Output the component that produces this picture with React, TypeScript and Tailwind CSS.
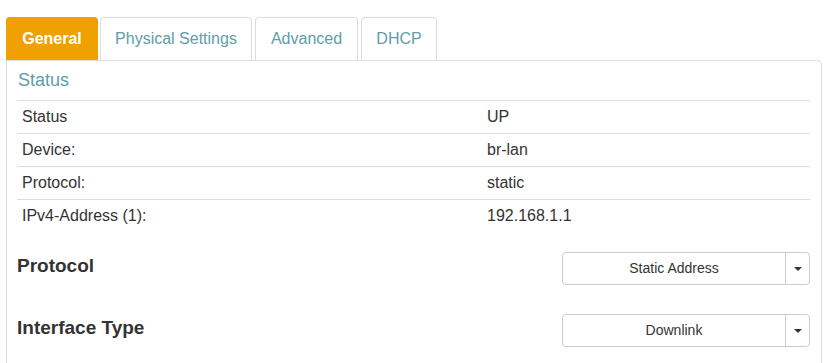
import React from 'react';

const tabs = [
  { label: 'General', w: 'w-[92px]', active: true },
  { label: 'Physical Settings', w: 'w-[152px]', active: false },
  { label: 'Advanced', w: 'w-[103px]', active: false },
  { label: 'DHCP', w: 'w-[76px]', active: false },
];

const rows = [
  ['Status', 'UP'],
  ['Device:', 'br-lan'],
  ['Protocol:', 'static'],
  ['IPv4-Address (1):', '192.168.1.1'],
];

const Select: React.FC<{ value: string }> = ({ value }) => (
  <div className="flex h-[33px] w-[248px] rounded-[4px] border border-[#cccccc] bg-white text-[14px] text-[#333333]">
    <div className="flex flex-1 items-center justify-center">{value}</div>
    <div className="flex w-[24px] items-center justify-center border-l border-[#cccccc]">
      <span className="h-0 w-0 border-x-[4px] border-t-[4px] border-x-transparent border-t-[#333333]"></span>
    </div>
  </div>
);

const App: React.FC = () => {
  return (
    <div className="h-[363px] w-[835px] overflow-hidden bg-white px-[6px] pt-[17px] font-['Liberation_Sans',Arial,sans-serif] text-[#333333]">
      {/* Onglets */}
      <div className="flex items-end">
        {tabs.map((t, i) => (
          <div
            key={t.label}
            className={`${t.w} ${i === 0 ? '' : i === 1 ? 'ml-[2px]' : 'ml-[3px]'} flex h-[43px] items-center justify-center rounded-t-[4px] text-[16px] ${
              t.active
                ? 'bg-[#f0a000] font-bold text-white'
                : 'border border-b-0 border-[#dddddd] text-[#5e9da9]'
            }`}
          >
            {t.label}
          </div>
        ))}
      </div>

      {/* Panneau */}
      <div className="h-[400px] w-[816px] rounded-tr-[4px] border border-[#dddddd] pl-[10px] pr-[11px]">
        <div className="flex h-[39px] items-center pl-[1px] text-[18px] text-[#5e9da9]">Status</div>
        <div className="text-[16px]">
          {rows.map(([k, v]) => (
            <div key={k} className="flex h-[33px] items-center border-t border-[#dddddd]">
              <div className="w-[470px] pl-[5px]">{k}</div>
              <div>{v}</div>
            </div>
          ))}
        </div>

        <div className="mt-[20px] flex items-start justify-between">
          <div className="mt-[3px] text-[19px] font-bold leading-[22px]">Protocol</div>
          <Select value="Static Address" />
        </div>
        <div className="mt-[29px] flex items-start justify-between">
          <div className="mt-[3px] text-[19px] font-bold leading-[22px]">Interface Type</div>
          <Select value="Downlink" />
        </div>
      </div>
    </div>
  );
};

export default App;
